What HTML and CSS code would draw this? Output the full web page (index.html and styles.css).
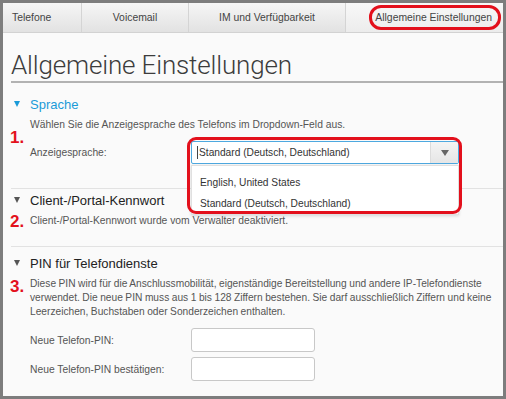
FILE: index.html
```html
<!DOCTYPE html>
<html lang="de">
<head>
<meta charset="utf-8">
<link rel="stylesheet" href="styles.css">
</head>
<body>
<div class="frame">
  <nav class="tabs">
    <div class="tab tab-first">Telefone</div>
    <div class="tab tab-vm">Voicemail</div>
    <div class="tab tab-im">IM und Verfügbarkeit</div>
    <div class="tab tab-active">Allgemeine Einstellungen</div>
    <div class="ring ring-tab"></div>
  </nav>
  <main class="content">
    <h1 class="title">Allgemeine Einstellungen</h1>

    <section class="section sec-lang">
      <h2 class="head head-blue"><span class="tri tri-blue"></span>Sprache</h2>
      <p class="desc">Wählen Sie die Anzeigesprache des Telefons im Dropdown-Feld aus.</p>
      <div class="row">
        <span class="label">Anzeigesprache:</span>
        <div class="select">
          <span class="select-text"><span class="caret"></span>Standard (Deutsch, Deutschland)</span>
          <span class="select-btn"><span class="tri tri-gray"></span></span>
        </div>
      </div>
      <ul class="menu">
        <li>English, United States</li>
        <li>Standard (Deutsch, Deutschland)</li>
      </ul>
      <div class="ring ring-select"></div>
      <span class="num num1">1.</span>
    </section>

    <section class="section sec-pw">
      <h2 class="head"><span class="tri tri-dark"></span>Client-/Portal-Kennwort</h2>
      <p class="desc">Client-/Portal-Kennwort wurde vom Verwalter deaktiviert.</p>
      <span class="num num2">2.</span>
    </section>

    <section class="section sec-pin">
      <h2 class="head"><span class="tri tri-dark"></span>PIN für Telefondienste</h2>
      <p class="desc para">Diese PIN wird für die Anschlussmobilität, eigenständige Bereitstellung und andere IP-Telefondienste verwendet. Die neue PIN muss aus 1 bis 128 Ziffern bestehen. Sie darf ausschließlich Ziffern und keine Leerzeichen, Buchstaben oder Sonderzeichen enthalten.</p>
      <div class="row row-pin">
        <span class="label">Neue Telefon-PIN:</span>
        <div class="input"></div>
      </div>
      <div class="row row-pin">
        <span class="label">Neue Telefon-PIN bestätigen:</span>
        <div class="input"></div>
      </div>
      <span class="num num3">3.</span>
    </section>
  </main>
</div>
</body>
</html>
```

FILE: styles.css
```css
html, body {
  margin: 0;
  padding: 0;
  background: #7d7d7d;
}
.frame {
  width: 506px;
  height: 399px;
  box-sizing: border-box;
  border: 3px solid #7d7d7d;
  background: #fafafa;
  position: relative;
  overflow: hidden;
  font-family: "Liberation Sans", Arial, sans-serif;
}
.tabs {
  position: relative;
  display: flex;
  height: 29px;
  border-bottom: 1px solid #d2d2d2;
  background: linear-gradient(#f6f6f6, #e2e2e2);
}
.tab {
  display: flex;
  align-items: center;
  font-size: 10.4px;
  color: #444;
  border-right: 1px solid #d4d4d4;
  box-sizing: border-box;
}
.tab-first { width: 79px; padding-left: 9px; }
.tab-vm { width: 107px; justify-content: center; }
.tab-im { width: 157px; justify-content: center; }
.tab-active {
  flex: 1;
  justify-content: flex-end;
  padding-right: 11px;
  border-right: none;
  background: linear-gradient(#f8f8f8, #ececec);
}
.ring {
  position: absolute;
  border: 3px solid #e3101c;
  box-sizing: border-box;
}
.ring-tab {
  left: 366px;
  top: 2px;
  width: 132px;
  height: 25px;
  border-radius: 12px;
}
.content {
  padding: 0 0 0 8px;
}
.title {
  margin: 0;
  padding-top: 16px;
  height: 32px;
  line-height: 32px;
  font-family: Roboto, "Liberation Sans", sans-serif;
  font-weight: 300;
  font-size: 26px;
  letter-spacing: -0.15px;
  color: #3c3c3c;
  border-bottom: 2px solid #b2b2b2;
}
.section {
  position: relative;
  padding-left: 19px;
  border-bottom: 1px solid #e2e2e2;
  box-sizing: border-box;
}
.head {
  margin: 0;
  font-size: 13px;
  font-weight: normal;
  color: #222;
  display: flex;
  align-items: center;
  height: 16px;
  position: relative;
}
.head-blue { color: #1a9ad8; }
.tri {
  display: inline-block;
  width: 0;
  height: 0;
  border-left: 3.5px solid transparent;
  border-right: 3.5px solid transparent;
  border-top: 6px solid #555;
}
.head .tri {
  position: absolute;
  left: -16px;
  top: 5px;
}
.tri-blue { border-top-color: #1a9ad8; }
.tri-dark { border-top-color: #555; }
.desc {
  margin: 0;
  font-size: 10.3px;
  color: #555;
  line-height: 14px;
}
.sec-lang { padding-top: 13px; height: 106px; }
.sec-lang .desc { margin-top: 6px; }
.row {
  display: flex;
  align-items: center;
  font-size: 10.3px;
  color: #555;
}
.label { width: 161px; }
.sec-lang .row { margin-top: 9px; }
.select {
  width: 268px;
  height: 23px;
  box-sizing: border-box;
  border: 1px solid #4ea9e0;
  border-radius: 2px;
  background: #fff;
  display: flex;
}
.select-text {
  flex: 1;
  display: flex;
  align-items: center;
  padding-left: 5px;
  font-size: 10.2px;
  color: #333;
}
.caret {
  width: 1px;
  height: 13px;
  background: #444;
  margin-right: 1px;
}
.select-btn {
  width: 27px;
  border-left: 1px solid #dcdcdc;
  background: linear-gradient(#f4f4f4, #e6e6e6);
  display: flex;
  align-items: center;
  justify-content: center;
}
.tri-gray {
  border-left-width: 4px;
  border-right-width: 4px;
  border-top-width: 6px;
  border-top-color: #666;
}
.menu {
  position: absolute;
  left: 180px;
  top: 82px;
  width: 268px;
  height: 50px;
  margin: 0;
  padding: 7px 0 0;
  box-sizing: border-box;
  list-style: none;
  background: #fff;
  border: 1px solid #e0e0e0;
  box-shadow: 0 1px 3px rgba(0,0,0,0.15);
  font-size: 10.2px;
  color: #333;
  z-index: 2;
}
.menu li {
  height: 20.5px;
  line-height: 20px;
  padding-left: 8px;
}
.ring-select {
  left: 176px;
  top: 54px;
  width: 275px;
  height: 77px;
  border-radius: 9px;
  z-index: 3;
}
.num {
  position: absolute;
  left: -1px;
  color: #e3101c;
  font-weight: bold;
  font-size: 17px;
  line-height: 18px;
}
.num1 { top: 46px; }
.sec-pw { padding-top: 3px; height: 58px; }
.sec-pw .desc { margin-top: 6px; }
.num2 { top: 24px; }
.sec-pin { padding-top: 8px; border-bottom: none; }
.sec-pin .para {
  margin-top: 6px;
  width: 472px;
  font-size: 10.2px;
  word-spacing: -0.3px;
}
.num3 { top: 31px; }
.row-pin { height: 24px; margin-bottom: 5px; }
.sec-pin .para + .row-pin { margin-top: 9px; }
.input {
  width: 124px;
  height: 24px;
  box-sizing: border-box;
  border: 1px solid #c8c8c8;
  border-radius: 3px;
  background: #fff;
}
```
